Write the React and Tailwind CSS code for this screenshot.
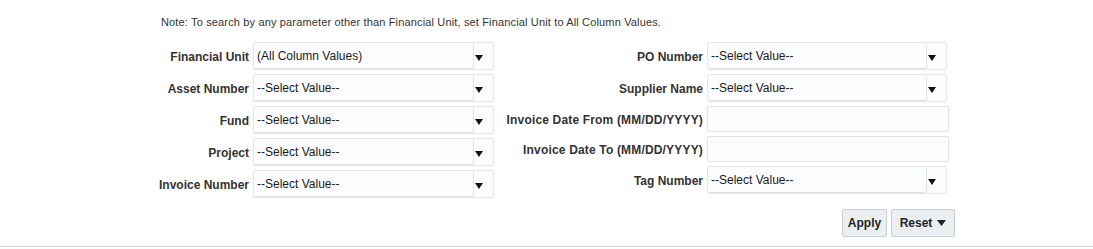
import React from "react";

const Arrow = () => (
  <svg width="8" height="6" viewBox="0 0 8 6" className="block">
    <path d="M0 0 H8 L4 6 Z" fill="#111" />
  </svg>
);

const Select = ({ value, w = "w-[241px]" }) => (
  <div className={`${w} h-[28px] flex border border-[#e3e7ea] rounded-[2px] bg-[#fbfcfd]`}>
    <div className="flex-1 flex items-center pl-[3px] pt-[1px] border-r border-b border-[#dde2e6] rounded-[2px] bg-[#fcfdfe] text-[12px] text-[#1a1a1a]">
      {value}
    </div>
    <div className="w-[19px] flex items-center pl-[1px] pt-[4px]">
      <Arrow />
    </div>
  </div>
);

const TextInput = () => (
  <div className="w-[242px] h-[26px] border border-[#dfe3e6] rounded-[2px] bg-[#fcfdfe]" />
);

const Row = ({ label, labelW, h = "h-[32px]", track = "", children }) => (
  <div className={`flex items-center shrink-0 ${h}`}>
    <div className={`${labelW} text-right text-[12px] font-bold text-[#333] pt-[1px] ${track}`}>{label}</div>
    <div className="w-[4px]" />
    {children}
  </div>
);

export default function App() {
  const font = { fontFamily: '"Liberation Sans", Arial, sans-serif' };
  return (
    <div className="w-[1093px] h-[249px] bg-white flex flex-col" style={font}>
      <div className="shrink-0 pl-[161px] pt-[16px] h-[40px] text-[11px] leading-[13px] tracking-[0.15px] text-[#333]">
        Note: To search by any parameter other than Financial Unit, set Financial Unit to All Column Values.
      </div>
      <div className="shrink-0 flex pl-[155px]">
        <div className="flex flex-col">
          <Row label="Financial Unit" labelW="w-[94px]">
            <Select value="(All Column Values)" />
          </Row>
          <Row label="Asset Number" labelW="w-[94px]">
            <Select value="--Select Value--" />
          </Row>
          <Row label="Fund" labelW="w-[94px]">
            <Select value="--Select Value--" />
          </Row>
          <Row label="Project" labelW="w-[94px]">
            <Select value="--Select Value--" />
          </Row>
          <Row label="Invoice Number" labelW="w-[94px]">
            <Select value="--Select Value--" />
          </Row>
        </div>
        <div className="flex flex-col ml-[8px]">
          <Row label="PO Number" labelW="w-[201px]">
            <Select value="--Select Value--" w="w-[240px]" />
          </Row>
          <Row label="Supplier Name" labelW="w-[201px]">
            <Select value="--Select Value--" w="w-[240px]" />
          </Row>
          <Row label="Invoice Date From (MM/DD/YYYY)" labelW="w-[201px]" h="h-[30px]" track="tracking-[0.17px]">
            <TextInput />
          </Row>
          <Row label="Invoice Date To (MM/DD/YYYY)" labelW="w-[201px]" h="h-[30px]" track="tracking-[0.17px]">
            <TextInput />
          </Row>
          <Row label="Tag Number" labelW="w-[201px]">
            <Select value="--Select Value--" w="w-[240px]" />
          </Row>
        </div>
      </div>
      <div className="shrink-0 w-[955px] flex justify-end gap-[4px] mt-[9px]">
        <button className="h-[28px] w-[45px] border border-[#c8cfd5] rounded-[2px] bg-[#eceff1] text-[12px] font-bold text-[#222]">
          Apply
        </button>
        <button className="h-[28px] w-[64px] border border-[#c8cfd5] rounded-[2px] bg-[#eceff1] text-[12px] font-bold text-[#222] flex items-center justify-center gap-[5px]">
          Reset
          <svg width="9" height="6" viewBox="0 0 9 6"><path d="M0 0 H9 L4.5 6 Z" fill="#222" /></svg>
        </button>
      </div>
      <div className="shrink-0 mt-[9px] h-[1px] bg-[#cdd6e0]" />
    </div>
  );
}
